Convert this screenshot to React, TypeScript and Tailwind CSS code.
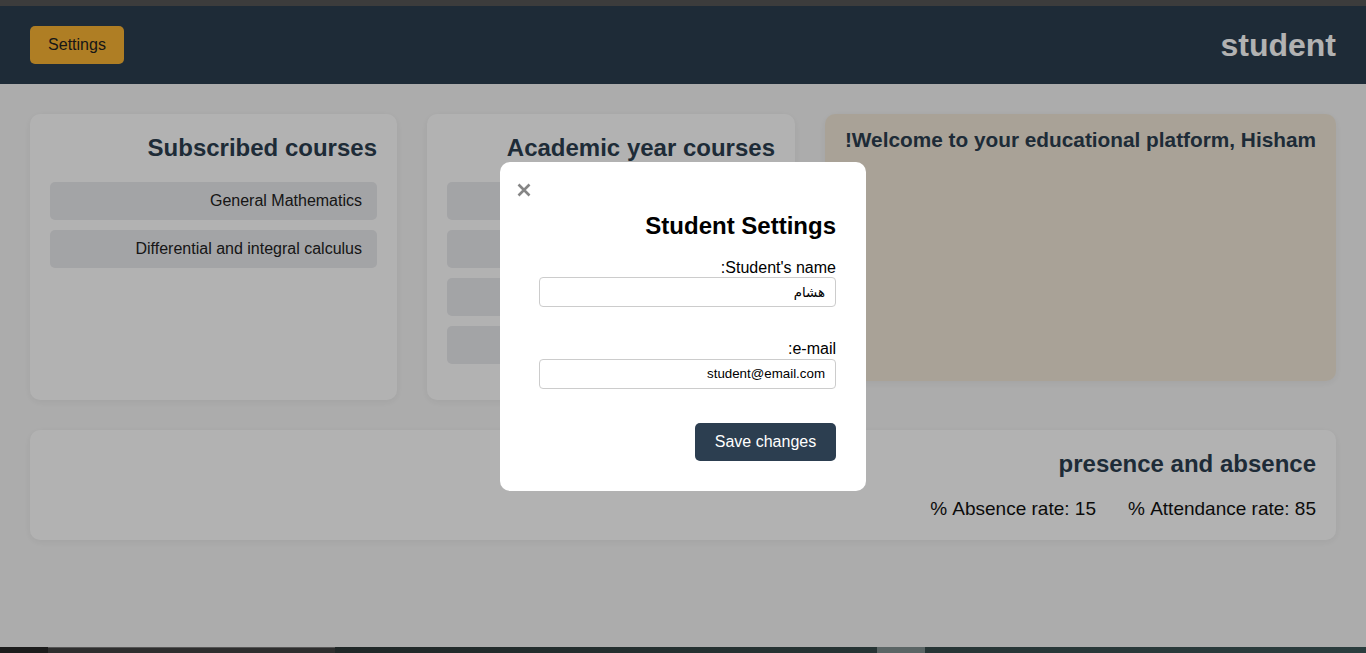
import React from "react";

const font = { fontFamily: '"Liberation Sans", Arial, "DejaVu Sans", sans-serif' };

const subscribed = ["General Mathematics", "Differential and integral calculus"];
const yearCourses = [
  "General Mathematics",
  "Differential and integral calculus",
  "Linear algebra",
  "Statistics and probability",
];

function CourseList({ title, items }: { title: string; items: string[] }) {
  return (
    <>
      <h3 className="text-[24px] font-bold leading-[1.15] text-[#2c3e50] mb-[20px]">{title}</h3>
      <div className="flex flex-col gap-[10px]">
        {items.map((c) => (
          <div
            key={c}
            className="h-[38px] flex items-center px-[15px] rounded-[5px] bg-[#eaebee] text-[16px] text-[#222]"
          >
            {c}
          </div>
        ))}
      </div>
    </>
  );
}

export default function App() {
  return (
    <div dir="rtl" style={font} className="h-[653px] flex flex-col bg-[#f7f7f7] overflow-hidden">
      {/* browser chrome strip */}
      <div className="relative z-[60] h-[6px] bg-[#3c3c3c] shrink-0" />

      <header className="h-[78px] shrink-0 bg-[#2c3e50] flex items-center justify-between px-[30px]">
        <h1 className="text-[32px] font-bold text-white leading-none">student</h1>
        <button className="h-[38px] w-[94px] rounded-[5px] bg-[#fbb534] text-[16px] text-[#222]">
          Settings
        </button>
      </header>

      <main className="flex-1 px-[30px] pt-[30px]">
        <div className="flex items-start gap-[30px]">
          <section className="w-[511px] h-[267px] rounded-[10px] bg-[#f3e9d9] px-[20px] pt-[14px] shadow-[0_2px_8px_rgba(0,0,0,0.06)]">
            <h2 className="text-[20.8px] font-bold leading-[1.15] whitespace-nowrap text-[#2c3e50]">
              Welcome to your educational platform, Hisham!
            </h2>
          </section>
          <section className="w-[368px] h-[286px] rounded-[10px] bg-white p-[20px] shadow-[0_2px_8px_rgba(0,0,0,0.06)]">
            <CourseList title="Academic year courses" items={yearCourses} />
          </section>
          <section className="w-[367px] h-[286px] rounded-[10px] bg-white p-[20px] shadow-[0_2px_8px_rgba(0,0,0,0.06)]">
            <CourseList title="Subscribed courses" items={subscribed} />
          </section>
        </div>

        <section className="mt-[30px] h-[110px] rounded-[10px] bg-white p-[20px] shadow-[0_2px_8px_rgba(0,0,0,0.06)]">
          <h3 className="text-[24px] font-bold leading-[1.15] text-[#2c3e50]">presence and absence</h3>
          <div className="mt-[20px] flex gap-[32px] text-[19px] leading-[1.15] text-[#111]">
            <span>Attendance rate: 85 %</span>
            <span>Absence rate: 15 %</span>
          </div>
        </section>
      </main>

      {/* taskbar strip */}
      <div className="relative z-[60] h-[6px] shrink-0 flex bg-gradient-to-l from-[#2b3d3e] via-[#243030] to-[#1c1f1f]">
        <div className="w-[441px]" />
        <div className="w-[48px] bg-[#5b6565]" />
        <div className="flex-1" />
        <div className="w-[287px] bg-[#2e2e2e] border-t border-[#555]" />
        <div className="w-[48px] bg-[#1c1c1c]" />
      </div>

      <div className="fixed inset-0 z-50 bg-black/30 flex items-center justify-center">
        <div className="relative w-[366px] rounded-[10px] bg-white px-[30px] pt-[30px] pb-[30px] text-black">
          <button className="absolute left-[16px] top-[20px] w-[16px] h-[16px] flex items-center justify-center">
            <svg width="14" height="14" viewBox="0 0 14 14">
              <path d="M1.5 1.5 L12.5 12.5 M12.5 1.5 L1.5 12.5" stroke="#858585" strokeWidth="2.6" strokeLinecap="butt" />
            </svg>
          </button>
          <h2 className="mt-[20px] text-[24px] font-bold leading-[1.15]">Student Settings</h2>

          <label className="block mt-[19px] text-[16px] leading-[1.15]">Student's name:</label>
          <input
            defaultValue="هشام"
            className="block w-[297px] h-[30px] px-[10px] border border-[#ccc] rounded-[4px] text-[13.33px] text-black outline-none"
          />

          <label className="block mt-[33px] text-[16px] leading-[1.15]">e-mail:</label>
          <input
            defaultValue="student@email.com"
            className="block w-[297px] h-[30px] px-[10px] border border-[#ccc] rounded-[4px] text-[13.33px] text-black outline-none"
          />

          <div className="mt-[34px] flex">
            <button className="h-[38px] w-[141px] rounded-[5px] bg-[#2c3e50] text-white text-[16px]">
              Save changes
            </button>
          </div>
        </div>
      </div>
    </div>
  );
}
